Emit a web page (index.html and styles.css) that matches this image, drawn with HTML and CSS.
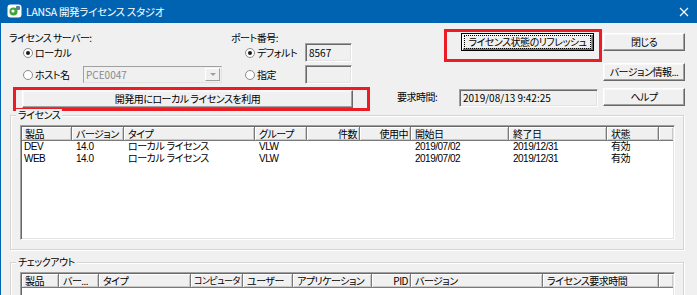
FILE: index.html
```html
<!DOCTYPE html>
<html lang="ja">
<head>
    <meta charset="UTF-8">
    <title>LANSA 開発ライセンス スタジオ</title>
    <link rel="stylesheet" href="styles.css">
</head>
<body>
    <div class="window">
        <div class="titlebar">
            <svg class="app-icon" width="15" height="14" viewBox="0 0 15 14">
                <rect x="0.5" y="0.5" width="14" height="13" rx="3" fill="#fff"/>
                <circle cx="6.5" cy="7.5" r="4" fill="#3fa535"/>
                <rect x="9" y="2" width="4" height="4" rx="1" fill="#5a7f9a"/>
                <circle cx="6" cy="7" r="1.6" fill="#fff"/>
            </svg>
            <span class="title">LANSA 開発ライセンス スタジオ</span>
            <svg class="close" width="10" height="10" viewBox="0 0 10 10">
                <path d="M1 1L9 9M9 1L1 9" stroke="#fff" stroke-width="1.1"/>
            </svg>
        </div>

        <!-- server / port settings -->
        <div class="top-row">
            <div class="opt-group server">
                <div class="opt-label">ライセンス サーバー:</div>
                <div class="opt-row">
                    <span class="radio checked"></span><span class="opt-text">ローカル</span>
                </div>
                <div class="opt-row">
                    <span class="radio"></span><span class="opt-text">ホスト名</span>
                    <div class="combo">
                        <span class="combo-text">PCE0047</span>
                        <span class="combo-arrow"></span>
                    </div>
                </div>
            </div>
            <div class="opt-group port">
                <div class="opt-label">ポート番号:</div>
                <div class="opt-row">
                    <span class="radio checked"></span><span class="opt-text">デフォルト</span>
                    <div class="textbox port-box">8567</div>
                </div>
                <div class="opt-row">
                    <span class="radio"></span><span class="opt-text">指定</span>
                    <div class="textbox port-box"></div>
                </div>
            </div>
            <div class="mark mark-refresh">
                <button class="btn default refresh"><span class="focus">ライセンス状態のリフレッシュ</span></button>
            </div>
            <div class="side-buttons">
                <button class="btn side">閉じる</button>
                <button class="btn side">バージョン情報...</button>
            </div>
        </div>

        <div class="second-row">
            <div class="mark mark-wide">
                <button class="btn wide">開発用にローカル ライセンスを利用</button>
            </div>
            <span class="req-label">要求時間:</span>
            <div class="textbox time-box">2019/08/13 9:42:25</div>
            <button class="btn side help">ヘルプ</button>
        </div>

        <!-- licenses -->
        <div class="group license-group">
            <span class="group-title">ライセンス</span>
            <div class="listview">
                <div class="lv-head cols-license">
                    <span>製品</span><span>バージョン</span><span>タイプ</span><span>グループ</span>
                    <span class="num">件数</span><span class="num">使用中</span><span>開始日</span>
                    <span>終了日</span><span>状態</span><span></span>
                </div>
                <div class="lv-row cols-license">
                    <span>DEV</span><span>14.0</span><span>ローカル ライセンス</span><span>VLW</span>
                    <span></span><span></span><span>2019/07/02</span><span>2019/12/31</span><span>有効</span><span></span>
                </div>
                <div class="lv-row cols-license">
                    <span>WEB</span><span>14.0</span><span>ローカル ライセンス</span><span>VLW</span>
                    <span></span><span></span><span>2019/07/02</span><span>2019/12/31</span><span>有効</span><span></span>
                </div>
            </div>
        </div>

        <!-- checkouts -->
        <div class="group checkout-group">
            <span class="group-title">チェックアウト</span>
            <div class="listview">
                <div class="lv-head cols-checkout">
                    <span>製品</span><span>バー...</span><span>タイプ</span><span class="tight">コンピュータ</span>
                    <span>ユーザー</span><span>アプリケーション</span><span class="num">PID</span>
                    <span>バージョン</span><span>ライセンス要求時間</span><span></span>
                </div>
            </div>
        </div>
    </div>
</body>
</html>
```

FILE: styles.css
```css
body {
    margin: 0;
    padding: 0;
    background-color: #f0f0f0;
    font-family: "Noto Sans CJK JP", "Liberation Sans", sans-serif;
    font-size: 10px;
    letter-spacing: -0.5px;
    font-feature-settings: "palt";
    color: #000;
}
.window {
    width: 697px;
    height: 295px;
    box-sizing: border-box;
    border-left: 1px solid #0063b1;
    background-color: #f0f0f0;
    overflow: hidden;
}
.titlebar {
    height: 23px;
    margin-left: -1px;
    background-color: #0063b1;
    display: flex;
    align-items: center;
    color: #fff;
}
.app-icon {
    margin-left: 7px;
    margin-top: -1px;
}
.title {
    margin-left: 4px;
    font-size: 10.5px;
    letter-spacing: -0.3px;
}
.close {
    margin-left: auto;
    margin-right: 8px;
}

/* top settings */
.top-row {
    display: flex;
    height: 62px;
}
.opt-group {
    margin-top: 10px;
    display: flex;
    flex-direction: column;
}
.server {
    margin-left: 8px;
    width: 213px;
}
.port {
    margin-left: 9px;
    width: 121px;
}
.opt-label {
    height: 10px;
    line-height: 10px;
    white-space: nowrap;
}
.opt-row {
    display: flex;
    align-items: center;
    height: 19px;
    padding-left: 14px;
}
.opt-row + .opt-row {
    margin-top: 3px;
}
.radio {
    width: 10px;
    height: 10px;
    box-sizing: border-box;
    border-radius: 50%;
    border: 1px solid #8c8c8c;
    background: #fff;
    margin-right: 2px;
    position: relative;
}
.radio.checked::after {
    content: "";
    position: absolute;
    left: 2px;
    top: 2px;
    width: 4px;
    height: 4px;
    border-radius: 50%;
    background: #1a1a1a;
}
.opt-text {
    width: 48px;
    white-space: nowrap;
}
.combo {
    width: 139px;
    height: 17px;
    box-sizing: border-box;
    border: 1px solid;
    border-color: #a0a0a0 #e3e3e3 #e3e3e3 #a0a0a0;
    background: #f0f0f0;
    display: flex;
    align-items: center;
    justify-content: space-between;
}
.combo-text {
    color: #8a8a8a;
    padding-left: 2px;
    letter-spacing: 0;
}
.combo-arrow {
    width: 15px;
    height: 13px;
    box-sizing: border-box;
    margin-right: 1px;
    border: 1px solid;
    border-color: #fff #a0a0a0 #a0a0a0 #fff;
    position: relative;
}
.combo-arrow::after {
    content: "";
    position: absolute;
    left: 4px;
    top: 4px;
    border-left: 3px solid transparent;
    border-right: 3px solid transparent;
    border-top: 3px solid #a0a0a0;
}
.textbox {
    box-sizing: border-box;
    height: 19px;
    border: 1px solid;
    border-color: #a0a0a0 #fff #fff #a0a0a0;
    box-shadow: inset 1px 1px #696969, inset -1px -1px #e3e3e3;
    background: #f0f0f0;
    padding: 2px 3px 0;
    line-height: 14px;
    letter-spacing: 0;
}
.port-box {
    width: 47px;
}

/* red marks */
.mark {
    box-sizing: border-box;
    border: 3px solid #ec1c24;
}
.mark-refresh {
    margin-left: 92px;
    margin-top: 6px;
    width: 158px;
    height: 33px;
    padding: 1px 5px 0 14px;
}

.btn {
    box-sizing: border-box;
    height: 18px;
    padding: 0;
    border: 1px solid;
    border-color: #fff #696969 #696969 #fff;
    box-shadow: inset -1px -1px #a0a0a0, inset 1px 1px #f8f8f8;
    background: #f0f0f0;
    font-family: inherit;
    font-size: 10px;
    letter-spacing: -0.5px;
    font-feature-settings: "palt";
    color: #000;
    line-height: 14px;
    white-space: nowrap;
}
.btn.default {
    border-color: #000;
    box-shadow: inset 1px 1px #fff, inset -1px -1px #696969, inset -2px -2px #a0a0a0;
}
.refresh {
    width: 133px;
    padding: 2px 3px;
}
.focus {
    display: block;
    outline: 1px dotted #000;
    line-height: 12px;
}
.side-buttons {
    margin-left: 1px;
    margin-top: 10px;
    display: flex;
    flex-direction: column;
    gap: 12px;
}
.side {
    width: 82px;
}

.second-row {
    display: flex;
    margin-top: 2px;
    margin-left: 12px;
    height: 24px;
}
.mark-wide {
    width: 357px;
    height: 24px;
    padding: 0 14px 0 6px;
}
.wide {
    width: 331px;
}
.req-label {
    margin-left: 27px;
    width: 62px;
    line-height: 20px;
}
.time-box {
    width: 139px;
    height: 18px;
    margin-top: 2px;
    padding-top: 1px;
}
.help {
    margin-left: 5px;
    margin-top: 1px;
}

/* group boxes */
.group {
    position: relative;
    box-sizing: border-box;
    margin-left: 9px;
    width: 674px;
    border: 1px solid #d5d5d5;
    box-shadow: inset 1px 1px #fff, 1px 1px #fff;
    padding: 9px 0 0 9px;
}
.license-group {
    margin-top: 4px;
    height: 135px;
}
.checkout-group {
    margin-top: 12px;
    height: 80px;
}
.group-title {
    position: absolute;
    left: 5px;
    top: -7px;
    padding: 0 2px;
    background: #f0f0f0;
    line-height: 12px;
}
.listview {
    box-sizing: border-box;
    width: 655px;
    height: 115px;
    border: 1px solid;
    border-color: #a0a0a0 #fff #fff #a0a0a0;
    box-shadow: inset 1px 1px #696969, inset -1px -1px #e3e3e3;
    background: #fff;
    padding: 1px;
    overflow: hidden;
}
.cols-license {
    grid-template-columns: 50px 52px 131px 52px 53px 51px 98px 98px 52px 1fr;
}
.cols-checkout {
    grid-template-columns: 37px 40px 92px 52px 50px 79px 39px 132px 116px 1fr;
}
.lv-head {
    display: grid;
    height: 14px;
}
.lv-head span {
    box-sizing: border-box;
    background: #f0f0f0;
    border-right: 1px solid #7a7a7a;
    border-bottom: 1px solid #7a7a7a;
    box-shadow: inset 1px 1px #fff, inset -1px -1px #c8c8c8;
    padding: 0 2px 0 4px;
    line-height: 13px;
    white-space: nowrap;
    overflow: hidden;
}
.lv-head span.tight {
    font-size: 9px;
    letter-spacing: -0.6px;
    padding-left: 3px;
}
.lv-head span:first-child {
    padding-left: 3px;
}
.lv-head span:last-child {
    border-right: none;
}
.lv-row {
    display: grid;
    height: 12px;
    line-height: 12px;
    font-family: "Liberation Sans", "Noto Sans CJK JP", sans-serif;
}
.lv-row span {
    padding: 0 4px;
    white-space: nowrap;
}
.lv-row span:first-child {
    padding-left: 2px;
}
.num {
    text-align: right;
}
.checkout-group .listview {
    height: 60px;
}
```
